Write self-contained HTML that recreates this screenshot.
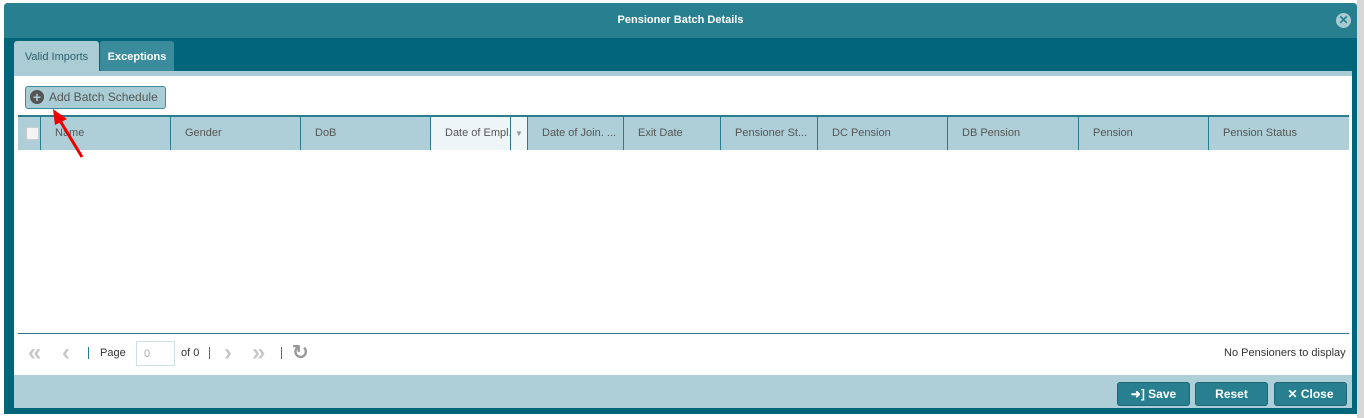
<!DOCTYPE html>
<html><head><style>
*{box-sizing:border-box;margin:0;padding:0}
body{width:1364px;height:418px;background:#fff;font-family:"Liberation Sans",sans-serif;position:relative;overflow:hidden}
.a{position:absolute}
.th{position:absolute;top:0;height:33px;line-height:33px;font-size:11px;color:#555;border-left:1px solid #2a7c8e;padding-left:14px;white-space:nowrap;overflow:hidden}
.btn{position:absolute;top:382px;height:24px;background:#277f90;border:1px solid #1e6675;border-radius:3px;color:#fff;font-weight:bold;font-size:12px;line-height:22px;text-align:center;white-space:nowrap}
.pg{position:absolute;top:339px;font-size:24px;color:#c8c8c8;font-weight:bold}
</style></head><body>
<div class="a" style="left:1357px;top:0;width:7px;height:418px;background:#d8d8d8"></div>
<div class="a" style="left:4px;top:3px;width:1353px;height:411px;background:#02657a;border-radius:4px 4px 0 0"></div>
<div class="a" style="left:4px;top:3px;width:1353px;height:35px;background:#277f90;border-radius:4px 4px 0 0;color:#fff;font-size:11px;font-weight:bold;text-align:center;line-height:35px">Pensioner Batch Details</div>
<div class="a" style="left:1336px;top:13px;width:15px;height:15px;border-radius:50%;background:#a8cbd3;color:#277f90;font-size:12px;font-weight:bold;text-align:center;line-height:15px">✕</div>
<div class="a" style="left:14px;top:41px;width:85px;height:34px;background:#aacdd5;border-radius:3px 3px 0 0;font-size:11px;color:#2e5f6b;text-align:center;line-height:32px">Valid Imports</div>
<div class="a" style="left:100px;top:41px;width:74px;height:30px;background:#3a8b9c;border-radius:3px 3px 0 0;font-size:11px;color:#fff;font-weight:bold;text-align:center;line-height:32px">Exceptions</div>
<div class="a" style="left:14px;top:71px;width:1338px;height:5px;background:#aacdd5"></div>
<div class="a" style="left:14px;top:76px;width:1338px;height:299px;background:#fff"></div>
<div class="a" style="left:25px;top:86px;width:141px;height:23px;background:#aacdd5;border:1px solid #3a8b9c;border-radius:3px;font-size:12px;color:#555;line-height:21px;padding-left:23px;white-space:nowrap">Add Batch Schedule</div>
<div class="a" style="left:30px;top:90px;width:14px;height:14px;border-radius:50%;background:#555;color:#aacdd5;font-size:14px;font-weight:bold;text-align:center;line-height:14px">+</div>
<div class="a" style="left:18px;top:115px;width:1331px;height:35px;background:#aecfd7;border-top:2px solid #2a7c8e">
<div class="a" style="left:8px;top:10px;width:13px;height:13px;background:#f4f4f4;border:1px solid #ccc;border-radius:2px"></div>
<div class="th" style="left:22px;width:130px">Name</div>
<div class="th" style="left:152px;width:130px">Gender</div>
<div class="th" style="left:282px;width:130px">DoB</div>
<div class="th" style="left:412px;width:80px;background:#eef5f7">Date of Empl...</div>
<div class="th" style="left:492px;width:17px;background:#eef5f7;padding-left:4px;color:#999;font-size:8px">▼</div>
<div class="th" style="left:509px;width:96px">Date of Join. ...</div>
<div class="th" style="left:605px;width:97px">Exit Date</div>
<div class="th" style="left:702px;width:97px">Pensioner St...</div>
<div class="th" style="left:799px;width:130px">DC Pension</div>
<div class="th" style="left:929px;width:131px">DB Pension</div>
<div class="th" style="left:1060px;width:130px">Pension</div>
<div class="th" style="left:1190px;width:141px">Pension Status</div>
</div>
<svg class="a" style="left:45px;top:105px" width="45" height="60"><line x1="37" y1="52" x2="14" y2="14" stroke="#e00" stroke-width="3"/><polygon points="8,4 22,14 10,20" fill="#e00"/></svg>
<div class="a" style="left:18px;top:333px;width:1331px;height:1px;background:#2a7c8e"></div>
<div class="pg" style="left:28px">«</div>
<div class="pg" style="left:62px">‹</div>
<div class="a" style="left:88px;top:347px;width:1px;height:12px;background:#2a7c8e"></div>
<div class="a" style="left:100px;top:347px;font-size:11px;color:#333">Page</div>
<div class="a" style="left:136px;top:341px;width:39px;height:25px;border:1px solid #cfe0e4;font-size:11px;color:#aaa;padding:6px 0 0 7px">0</div>
<div class="a" style="left:181px;top:347px;font-size:11px;color:#333">of 0</div>
<div class="a" style="left:209px;top:347px;width:1px;height:12px;background:#2a7c8e"></div>
<div class="pg" style="left:224px">›</div>
<div class="pg" style="left:252px">»</div>
<div class="a" style="left:281px;top:347px;width:1px;height:12px;background:#2a7c8e"></div>
<div class="a" style="left:292px;top:340px;font-size:20px;color:#999;font-weight:bold">↻</div>
<div class="a" style="left:1224px;top:347px;font-size:11px;color:#333">No Pensioners to display</div>
<div class="a" style="left:14px;top:375px;width:1338px;height:33px;background:#aecfd7"></div>
<div class="btn" style="left:1117px;width:73px">➜] Save</div>
<div class="btn" style="left:1195px;width:73px">Reset</div>
<div class="btn" style="left:1274px;width:73px">✕ Close</div>
</body></html>
